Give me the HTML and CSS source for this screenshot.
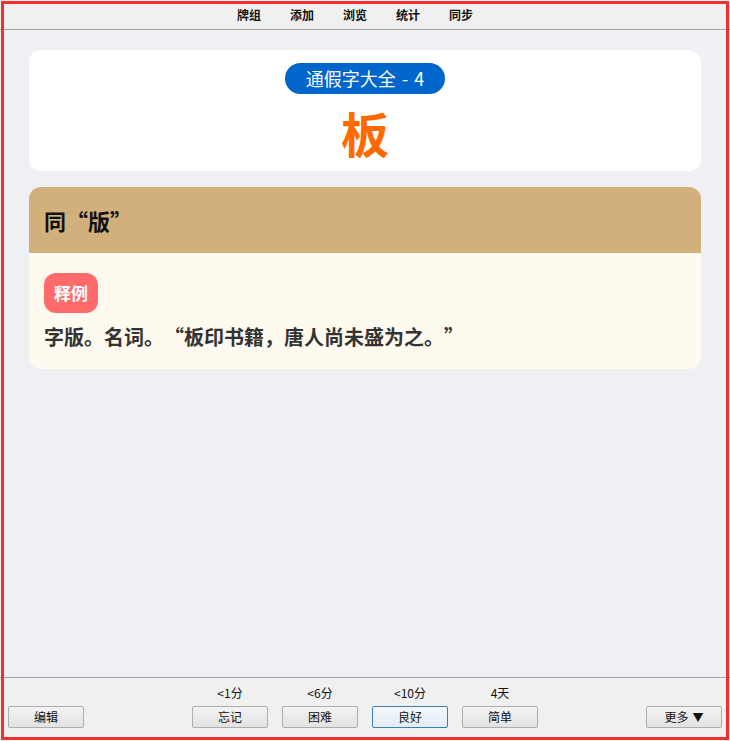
FILE: index.html
```html
<!DOCTYPE html>
<html lang="zh-CN">
<head>
<meta charset="utf-8">
<title>板</title>
<link rel="stylesheet" href="styles.css">
</head>
<body>
<div class="app">
  <nav class="topbar">
    <a class="nav-item">牌组</a>
    <a class="nav-item">添加</a>
    <a class="nav-item">浏览</a>
    <a class="nav-item">统计</a>
    <a class="nav-item">同步</a>
  </nav>
  <main class="main">
    <section class="card front">
      <div class="deck-pill">通假字大全 - 4</div>
      <div class="big-char">板</div>
    </section>
    <section class="card back">
      <div class="back-head">同“版”</div>
      <div class="back-body">
        <span class="badge">释例</span>
        <p class="example">字版。名词。“板印书籍，唐人尚未盛为之。”</p>
      </div>
    </section>
  </main>
  <footer class="bottombar">
    <div class="side left"><button class="btn">编辑</button></div>
    <div class="answers">
      <div class="answer"><span class="due">&lt;1分</span><button class="btn">忘记</button></div>
      <div class="answer"><span class="due">&lt;6分</span><button class="btn">困难</button></div>
      <div class="answer"><span class="due">&lt;10分</span><button class="btn focus">良好</button></div>
      <div class="answer"><span class="due">4天</span><button class="btn">简单</button></div>
    </div>
    <div class="side right"><button class="btn">更多<span class="caret">▼</span></button></div>
  </footer>
</div>
<div class="frame"></div>
</body>
</html>
```
FILE: styles.css
```css
html, body {
  margin: 0;
  padding: 0;
  height: 100%;
}
body {
  font-family: "Noto Sans CJK SC", "Noto Sans", sans-serif;
  background: #eef0f3;
  overflow: hidden;
}
.app {
  display: flex;
  flex-direction: column;
  height: 741px;
}
.topbar {
  height: 29px;
  flex: none;
  background: #f0f0f0;
  border-bottom: 1px solid #a8a8a8;
  display: flex;
  justify-content: center;
  align-items: center;
  padding-right: 20px;
}
.nav-item {
  font-size: 12px;
  font-weight: bold;
  color: #111;
  padding: 0 14.5px;
  line-height: 16px;
}
.main {
  flex: 1;
  padding: 20px 29px;
  display: flex;
  flex-direction: column;
  gap: 16px;
}
.card {
  border-radius: 12px;
  overflow: hidden;
}
.front {
  background: #fff;
  height: 121px;
  box-sizing: border-box;
  padding-top: 13px;
  display: flex;
  flex-direction: column;
  align-items: center;
}
.deck-pill {
  background: #0066cc;
  color: #fff;
  font-size: 18px;
  line-height: 21px;
  padding: 5px 21px 5px 21px;
  border-radius: 16px;
  word-spacing: 2px;
}
.big-char {
  color: #ff6a00;
  font-size: 48px;
  font-weight: bold;
  line-height: 56px;
  margin-top: 10px;
}
.back {
  background: #fffaf0;
}
.back-head,
.example {
  font-variant-east-asian: full-width;
  font-feature-settings: "fwid" 1;
  text-spacing-trim: space-all;
}
.back-head {
  background: #d2b07c;
  height: 66px;
  box-sizing: border-box;
  padding: 0 15px;
  display: flex;
  align-items: center;
  font-size: 22px;
  font-weight: bold;
  color: #111;
}
.back-body {
  padding: 20px 15px 17px;
}
.badge {
  display: inline-block;
  background: #ff6b6b;
  color: #fff;
  font-size: 17px;
  font-weight: bold;
  line-height: 22px;
  padding: 9px 10px;
  border-radius: 12px;
}
.example {
  margin: 9px 0 0;
  font-size: 20px;
  font-weight: bold;
  color: #333;
  line-height: 30px;
}
.bottombar {
  flex: none;
  height: 64px;
  box-sizing: border-box;
  border-top: 1px solid #a8a8a8;
  background: #f0f0f0;
  padding: 0 8px 13px;
  display: grid;
  grid-template-columns: 1fr auto 1fr;
  align-items: end;
}
.side.right {
  display: flex;
  justify-content: flex-end;
}
.answers {
  display: flex;
  gap: 14px;
}
.answer {
  display: flex;
  flex-direction: column;
  align-items: center;
  gap: 6px;
}
.due {
  font-size: 12px;
  line-height: 15px;
  color: #111;
}
.btn {
  width: 76px;
  height: 22px;
  box-sizing: border-box;
  font-family: "Noto Sans CJK SC", "Noto Sans", sans-serif;
  font-size: 12px;
  color: #111;
  border: 1px solid #adadad;
  border-radius: 2px;
  background: linear-gradient(#f3f3f3, #e2e2e2);
  padding: 0;
  line-height: 18px;
}
.btn.focus {
  border-color: #3c7fb1;
  background: linear-gradient(#f2f7fc, #e2ecf5);
}
.caret {
  font-size: 11px;
  margin-left: 4px;
}
.frame {
  position: fixed;
  top: 1px;
  left: 1px;
  right: 1px;
  bottom: 1px;
  border: 3px solid #ee3030;
  pointer-events: none;
}
```
